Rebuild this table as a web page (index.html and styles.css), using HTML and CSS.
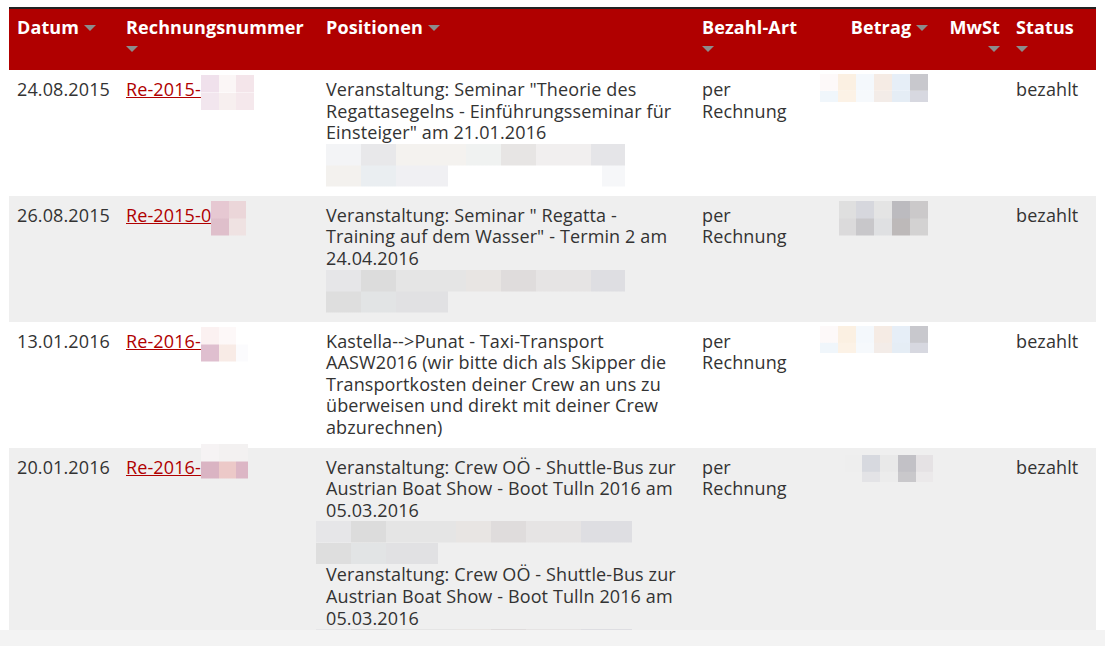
FILE: index.html
```html
<!DOCTYPE html>
<html lang="de">
<head>
    <meta charset="UTF-8">
    <title>Rechnungen</title>
    <link rel="stylesheet" href="styles.css">
</head>
<body>
<table class="bills">
    <colgroup>
        <col class="c-date">
        <col class="c-nr">
        <col class="c-pos">
        <col class="c-pay">
        <col class="c-sum">
        <col class="c-tax">
        <col class="c-state">
    </colgroup>
    <thead>
    <tr>
        <th>Datum <i class="sort"></i></th>
        <th>Rechnungsnummer <i class="sort"></i></th>
        <th>Positionen <i class="sort"></i></th>
        <th>Bezahl-Art <i class="sort"></i></th>
        <th class="num">Betrag <i class="sort"></i></th>
        <th class="num">MwSt <i class="sort"></i></th>
        <th>Status <i class="sort"></i></th>
    </tr>
    </thead>
    <tbody>
    <tr>
        <td>24.08.2015</td>
        <td><a href="#">Re-2015-</a><span class="blur nr-a"></span></td>
        <td>
            <div class="pos">Veranstaltung: Seminar "Theorie des Regattasegelns - Einführungsseminar für Einsteiger" am 21.01.2016</div>
            <div class="blur line light"></div>
        </td>
        <td>per Rechnung</td>
        <td class="num"><span class="blur sum-a"></span></td>
        <td class="num"></td>
        <td>bezahlt</td>
    </tr>
    <tr class="odd">
        <td>26.08.2015</td>
        <td><a href="#">Re-2015-0</a><span class="blur nr-b"></span></td>
        <td>
            <div class="pos">Veranstaltung: Seminar " Regatta - Training auf dem Wasser" - Termin 2 am 24.04.2016</div>
            <div class="blur line dark"></div>
        </td>
        <td>per Rechnung</td>
        <td class="num"><span class="blur sum-b"></span></td>
        <td class="num"></td>
        <td>bezahlt</td>
    </tr>
    <tr>
        <td>13.01.2016</td>
        <td><a href="#">Re-2016-</a><span class="blur nr-c"></span></td>
        <td>
            <div class="pos">Kastella--&gt;Punat - Taxi-Transport AASW2016 (wir bitte dich als Skipper die Transportkosten deiner Crew an uns zu überweisen und direkt mit deiner Crew abzurechnen)</div>
        </td>
        <td>per Rechnung</td>
        <td class="num"><span class="blur sum-a"></span></td>
        <td class="num"></td>
        <td>bezahlt</td>
    </tr>
    <tr class="odd">
        <td>20.01.2016</td>
        <td><a href="#">Re-2016-</a><span class="blur nr-d"></span></td>
        <td>
            <div class="pos">Veranstaltung: Crew OÖ - Shuttle-Bus zur Austrian Boat Show - Boot Tulln 2016 am 05.03.2016</div>
            <div class="blur line dark wide"></div>
            <div class="pos">Veranstaltung: Crew OÖ - Shuttle-Bus zur Austrian Boat Show - Boot Tulln 2016 am 05.03.2016</div>
            <div class="blur line dark wide"></div>
        </td>
        <td>per Rechnung</td>
        <td class="num"><span class="blur sum-d"></span></td>
        <td class="num"></td>
        <td>bezahlt</td>
    </tr>
    </tbody>
</table>

<div class="footer"></div>
</body>
</html>
```

FILE: styles.css
```css
* {
    box-sizing: border-box;
}

body {
    margin: 0;
    padding: 7px 9px 0;
    background: #fff;
    font-family: "Open Sans", "DejaVu Sans", sans-serif;
    font-size: 18px;
    line-height: 1.2;
    letter-spacing: 0.12px;
    color: #333;
}

.bills {
    width: 1087px;
    border-collapse: collapse;
    table-layout: fixed;
    border-top: 2px solid #222;
}

.c-date { width: 109px; }
.c-nr { width: 200px; }
.c-pos { width: 376px; }
.c-pay { width: 112px; }
.c-sum { width: 130px; }
.c-tax { width: 72px; }
.c-state { width: 88px; }

.bills th {
    background: #b00000;
    color: #fff;
    font-weight: bold;
    text-align: left;
    vertical-align: top;
    padding: 8px 8px 8px;
    height: 62px;
}

.bills td {
    vertical-align: top;
    padding: 9px 8px;
}

.bills .num {
    text-align: right;
}

.bills tr.odd td {
    background: #efefef;
}

.sort {
    display: inline-block;
    width: 0;
    height: 0;
    border-left: 6px solid transparent;
    border-right: 6px solid transparent;
    border-top: 6px solid #8c8c8c;
    vertical-align: middle;
    margin-top: -3px;
}

.bills a {
    color: #b00000;
    text-decoration: underline;
}

/* verpixelte Stellen */
.blur {
    display: inline-block;
    vertical-align: top;
}

.nr-a {
    width: 53px;
    height: 35px;
    margin: -4px 0 -10px;
    background:
        linear-gradient(90deg, #f0e1ec 0 18px, #fbf6f6 18px 35px, #f4e5ea 35px) top / 100% 50% no-repeat,
        linear-gradient(90deg, #f2e6ee 0 18px, #f7efef 18px 35px, #f5e8ec 35px) bottom / 100% 50% no-repeat;
}

.nr-b {
    width: 35px;
    height: 35px;
    margin: -4px 0 -10px;
    background:
        linear-gradient(90deg, #e6c8d2 0 18px, #ebd6d9 18px) top / 100% 50% no-repeat,
        linear-gradient(90deg, #dfbfcb 0 18px, #efe2e2 18px) bottom / 100% 50% no-repeat;
}

.nr-c {
    width: 47px;
    height: 35px;
    margin: -4px 0 -10px;
    background:
        linear-gradient(90deg, #fbf1f1 0 18px, #fdf8f8 18px 35px, #fff 35px) top / 100% 50% no-repeat,
        linear-gradient(90deg, #dfbfcf 0 18px, #f8ebe6 18px 35px, #fbfbfd 35px) bottom / 100% 50% no-repeat;
}

.nr-d {
    width: 47px;
    height: 35px;
    margin: -13px 0 -10px;
    background:
        linear-gradient(90deg, #f6f3f4 0 18px, #f3f1f1 18px) top / 100% 50% no-repeat,
        linear-gradient(90deg, #dab4c3 0 18px, #ecc9c8 18px 35px, #dcb6c5 35px) bottom / 100% 50% no-repeat;
}

.sum-a {
    width: 108px;
    height: 28px;
    margin: -5px 0 -5px;
    background:
        linear-gradient(90deg, #fdf9f9 0 18px, #fbf0e2 18px 36px, #f4f8fc 36px 54px, #f5ebe4 54px 72px, #e6eef7 72px 90px, #c8c8cd 90px) top / 100% 60% no-repeat,
        linear-gradient(90deg, #f0f6fb 0 18px, #fcf2e6 18px 36px, #f6f9fc 36px 54px, #f3ece8 54px 72px, #e5edf5 72px 90px, #d7d8e0 90px) bottom / 100% 40% no-repeat;
}

.sum-b {
    width: 89px;
    height: 35px;
    margin: -4px 0 -10px;
    background:
        linear-gradient(90deg, #dfdfdf 0 17px, #d6d7dd 17px 35px, #e4e4e4 35px 53px, #bcbbbf 53px 71px, #cbc9ca 71px) top / 100% 50% no-repeat,
        linear-gradient(90deg, #dbdadb 0 17px, #c8c7ca 17px 35px, #dfe0e2 35px 53px, #bdb9b9 53px 71px, #d3d2d2 71px) bottom / 100% 50% no-repeat;
}

.sum-d {
    width: 88px;
    height: 28px;
    margin: -2px -5px -8px 0;
    background:
        linear-gradient(90deg, #eeeeee 0 17px, #d7d9df 17px 35px, #e9e9e9 35px 53px, #c2c1c6 53px 71px, #e5e2e4 71px) top / 100% 60% no-repeat,
        linear-gradient(90deg, #efefef 0 17px, #e3e3e6 17px 35px, #ececec 35px 53px, #c9c8cb 53px 71px, #ebe9ea 71px) bottom / 100% 40% no-repeat;
}

.line {
    display: block;
    width: 299px;
    height: 43px;
}

.line.light {
    background:
        linear-gradient(90deg, #f3f4f6 0 35px, #e8e8ea 35px 70px, #f4f2ef 70px 140px, #f0f2f1 140px 175px, #e7e5e4 175px 210px, #f1efef 210px 265px, #e5e5e8 265px) top / 100% 50% no-repeat,
        linear-gradient(90deg, #f3f1ee 0 35px, #eaeef1 35px 70px, #f0f0f3 70px 122px, #fff 122px 276px, #f6f7f9 276px) bottom / 100% 50% no-repeat;
}

.line.dark {
    background:
        linear-gradient(90deg, #e6e6e8 0 35px, #dcdcdc 35px 70px, #e5e5e5 70px 140px, #e8e5e3 140px 175px, #dfdcdc 175px 210px, #e6e4e4 210px 265px, #dedee2 265px) top / 100% 50% no-repeat,
        linear-gradient(90deg, #dedede 0 35px, #e2e4e5 35px 70px, #e1e1e3 70px 122px, #efefef 122px) bottom / 100% 50% no-repeat;
}

.line.wide {
    width: 316px;
    margin-left: -10px;
}

.footer {
    position: fixed;
    left: 0;
    right: 0;
    bottom: 0;
    height: 16px;
    background: #f3f3f3;
}
```
